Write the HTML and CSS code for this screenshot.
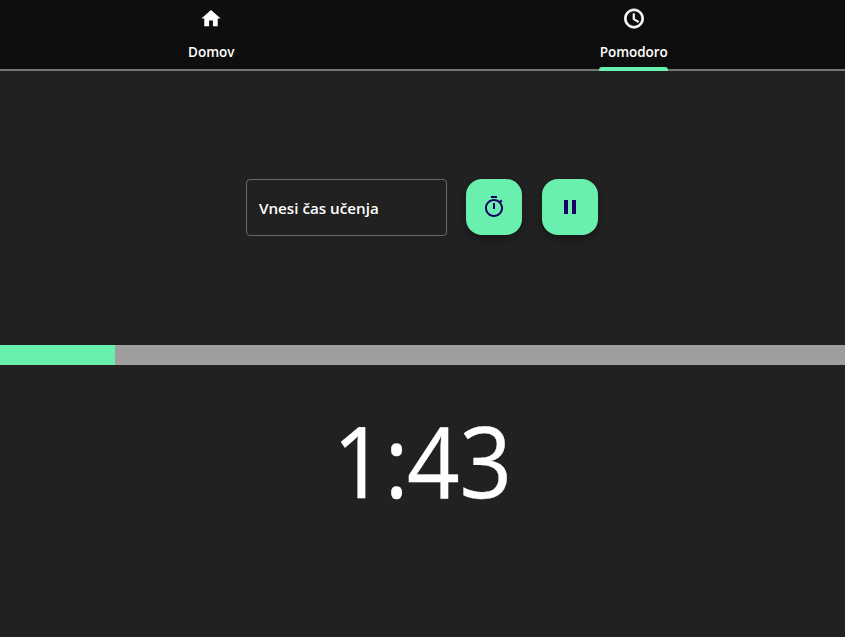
FILE: index.html
```html
<!DOCTYPE html>
<html lang="sl">
<head>
<meta charset="utf-8">
<title>Pomodoro</title>
<link rel="stylesheet" href="styles.css">
</head>
<body>
<nav class="tabs">
  <a class="tab"><svg class="icon" viewBox="0 0 24 24"><path d="M10 20v-6h4v6h5v-8h3L12 3 2 12h3v8z"/></svg><span class="label">Domov</span></a>
  <a class="tab active"><svg class="icon clock" viewBox="0 0 24 24"><path d="M11.99 2C6.47 2 2 6.48 2 12s4.47 10 9.99 10C17.52 22 22 17.52 22 12S17.52 2 11.99 2zM12 20c-4.42 0-8-3.58-8-8s3.58-8 8-8 8 3.58 8 8-3.58 8-8 8zm.5-13H11v6l5.25 3.15.75-1.23-4.5-2.67z"/></svg><span class="label">Pomodoro</span></a>
</nav>
<main>
  <section class="controls">
    <div class="field"><span>Vnesi čas učenja</span></div>
    <button class="fab" aria-label="Start"><svg class="icon" viewBox="0 0 24 24"><path d="M15 1H9v2h6V1zm-4 13h2V8h-2v6zm8.03-6.61 1.42-1.42c-.43-.51-.9-.99-1.41-1.41l-1.42 1.42C16.07 4.74 14.12 4 12 4c-4.97 0-9 4.03-9 9s4.02 9 9 9 9-4.03 9-9c0-2.12-.74-4.07-1.97-5.61zM12 20c-3.87 0-7-3.13-7-7s3.13-7 7-7 7 3.13 7 7-3.13 7-7 7z"/></svg></button>
    <button class="fab" aria-label="Pause"><svg class="icon" viewBox="0 0 24 24"><path d="M6 19h4V5H6v14zm8-14v14h4V5h-4z"/></svg></button>
  </section>
  <div class="progress"><div class="bar"></div></div>
  <div class="time"><span>1</span><span class="colon">:</span><span>43</span></div>
</main>
</body>
</html>
```
FILE: styles.css
```css
* { box-sizing: border-box; }
body { margin: 0; height: 637px; overflow: hidden; background: #212121; color: #fff; font-family: "Open Sans", "Noto Sans", sans-serif; }
.tabs { display: flex; height: 71px; background: #0e0e0e; border-bottom: 2px solid #737476; }
.tab { flex: 1; display: flex; flex-direction: column; align-items: center; padding-top: 7px; }
.icon { width: 24px; height: 24px; fill: currentColor; display: block; }
.clock { stroke: currentColor; stroke-width: .8; }
.label { position: relative; height: 40px; padding-top: 12px; font-size: 13.5px; font-weight: 600; line-height: 20px; letter-spacing: -.03px; }
.active .label::after { content: ""; position: absolute; left: -.5px; right: 0; bottom: -1.5px; height: 3.5px; border-radius: 3px 3px 0 0; background: #69f0ae; }
.controls { display: flex; justify-content: center; gap: 20px; height: 274px; padding: 108px 1px 0 0; }
.field { width: 201px; height: 57px; margin-right: -1px; border: 1px solid #68686b; border-radius: 4px; padding: 0 12px; display: flex; align-items: center; font-size: 15.2px; font-weight: 600; }
.fab { width: 56px; height: 56px; padding: 0; border: 0; border-radius: 16px; background: #69f0ae; color: #1a0063; display: flex; align-items: center; justify-content: center; box-shadow: 0 3px 5px -1px rgba(0,0,0,.2), 0 6px 10px rgba(0,0,0,.14); }
.progress { height: 20px; background: #9e9e9e; }
.bar { height: 100%; width: 115px; background: #69f0ae; }
.time { display: flex; justify-content: center; padding-top: 27px; font-size: 99px; line-height: 136px; transform: scaleX(.93); -webkit-text-stroke: .4px #fff; }
.colon { margin: 0 -2px 0 -1px; }
```
